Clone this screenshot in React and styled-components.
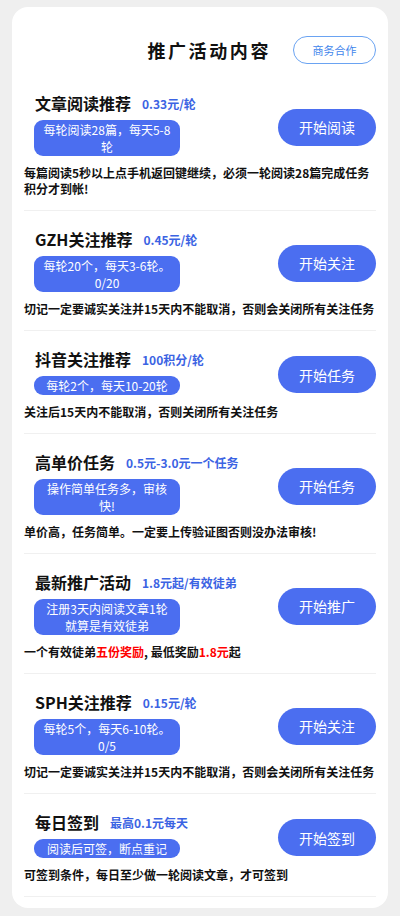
import React from "react";
import styled, { createGlobalStyle } from "styled-components";

const Global = createGlobalStyle`
  html, body { margin: 0; padding: 0; background: #efefef; }
  body { font-family: "Noto Sans CJK SC", "Noto Sans", sans-serif; }
  * { box-sizing: border-box; }
`;

const Page = styled.div`
  padding: 7px 12px 8px;
  min-height: 916px;
  background: #efefef;
`;

const Card = styled.div`
  background: #fff;
  border-radius: 16px;
  padding: 0 12px 11px;
`;

const Header = styled.div`
  display: flex;
  align-items: center;
  justify-content: flex-end;
  padding: 29px 0 11px;
`;

const PageTitle = styled.h1`
  margin: 0 22px 0 0;
  font-size: 18px;
  font-weight: 700;
  letter-spacing: 2.6px;
  color: #111;
  line-height: 28px;
`;

const OutlineButton = styled.button`
  width: 83px;
  height: 28px;
  border-radius: 14px;
  border: 1px solid #6aa3f2;
  background: #fff;
  color: #3f86ec;
  font-family: inherit;
  font-size: 11px;
  padding: 0;
`;

const Item = styled.div`
  padding: 17px 0 13px;
  border-bottom: 1px solid #f0f0f0;
`;

const Top = styled.div`
  display: flex;
  align-items: center;
  justify-content: space-between;
  padding-left: 10px;
`;

const Left = styled.div`
  display: flex;
  flex-direction: column;
  align-items: flex-start;
`;

const TitleRow = styled.div`
  display: flex;
  align-items: center;
  height: 22px;
`;

const Title = styled.span`
  font-size: 16px;
  font-weight: 700;
  color: #111;
  margin-left: 1px;
`;

const Price = styled.span`
  margin-left: 11px;
  font-size: 12px;
  font-weight: 700;
  color: #3b63e3;
`;

const Tag = styled.div`
  margin-top: 6px;
  width: 146px;
  padding: 1px 7px;
  border-radius: 9px;
  background: #4b6ef0;
  color: #fff;
  font-size: 12px;
  line-height: 17px;
  text-align: center;
`;

const ActionButton = styled.button`
  width: 98px;
  height: 37px;
  margin-top: 6px;
  border: none;
  border-radius: 19px;
  background: #4b6ef0;
  color: #fff;
  font-family: inherit;
  font-size: 14px;
  padding: 0;
  flex-shrink: 0;
`;

const Desc = styled.p`
  margin: 9px 0 0;
  font-size: 12px;
  line-height: 16px;
  font-weight: 700;
  color: #111;
`;

const Red = styled.span`
  color: #f00;
`;

const items = [
  {
    title: "文章阅读推荐",
    price: "0.33元/轮",
    tag: "每轮阅读28篇，每天5-8轮",
    btn: "开始阅读",
    desc: "每篇阅读5秒以上点手机返回键继续，必须一轮阅读28篇完成任务积分才到帐!",
  },
  {
    title: "GZH关注推荐",
    price: "0.45元/轮",
    tag: "每轮20个，每天3-6轮。0/20",
    btn: "开始关注",
    desc: "切记一定要诚实关注并15天内不能取消，否则会关闭所有关注任务",
  },
  {
    title: "抖音关注推荐",
    price: "100积分/轮",
    tag: "每轮2个，每天10-20轮",
    btn: "开始任务",
    desc: "关注后15天内不能取消，否则关闭所有关注任务",
  },
  {
    title: "高单价任务",
    price: "0.5元-3.0元一个任务",
    tag: "操作简单任务多，审核快!",
    btn: "开始任务",
    desc: "单价高，任务简单。一定要上传验证图否则没办法审核!",
  },
  {
    title: "最新推广活动",
    price: "1.8元起/有效徒弟",
    tag: (
      <>
        注册3天内阅读文章1轮
        <br />
        就算是有效徒弟
      </>
    ),
    btn: "开始推广",
    desc: (
      <>
        一个有效徒弟<Red>五份奖励</Red>, 最低奖励<Red>1.8元</Red>起
      </>
    ),
  },
  {
    title: "SPH关注推荐",
    price: "0.15元/轮",
    tag: "每轮5个，每天6-10轮。0/5",
    btn: "开始关注",
    desc: "切记一定要诚实关注并15天内不能取消，否则会关闭所有关注任务",
  },
  {
    title: "每日签到",
    price: "最高0.1元每天",
    tag: "阅读后可签，断点重记",
    btn: "开始签到",
    desc: "可签到条件，每日至少做一轮阅读文章，才可签到",
  },
];

export default function App() {
  return (
    <>
      <Global />
      <Page>
        <Card>
          <Header>
            <PageTitle>推广活动内容</PageTitle>
            <OutlineButton>商务合作</OutlineButton>
          </Header>
          {items.map((it, i) => (
            <Item key={i}>
              <Top>
                <Left>
                  <TitleRow>
                    <Title>{it.title}</Title>
                    <Price>{it.price}</Price>
                  </TitleRow>
                  <Tag>{it.tag}</Tag>
                </Left>
                <ActionButton>{it.btn}</ActionButton>
              </Top>
              <Desc>{it.desc}</Desc>
            </Item>
          ))}
        </Card>
      </Page>
    </>
  );
}
